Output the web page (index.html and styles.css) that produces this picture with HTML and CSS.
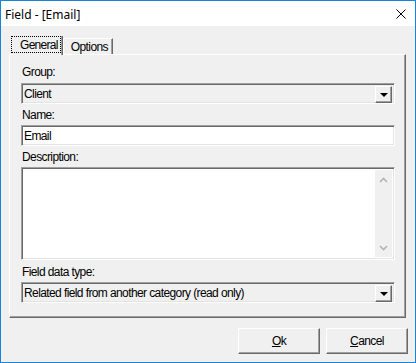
FILE: index.html
```html
<!DOCTYPE html>
<html>
<head>
    <title>Field - [Email]</title>
    <link rel="stylesheet" href="styles.css">
</head>
<body>
    <div class="window">
        <div class="titlebar">
            <span class="title">Field - [Email]</span>
            <svg class="close" width="10" height="10" viewBox="0 0 10 10">
                <path d="M0.5 0.5 L9.5 9.5 M9.5 0.5 L0.5 9.5" stroke="#000" stroke-width="1" fill="none"/>
            </svg>
        </div>

        <div class="content">
            <div class="tabs">
                <div class="tab active"><span class="focus">General</span></div>
                <div class="tab">Options</div>
            </div>

            <div class="panel">
                <div class="label">Group:</div>
                <div class="field combo">
                    <span class="value">Client</span>
                    <span class="drop"><span class="arrow"></span></span>
                </div>

                <div class="label">Name:</div>
                <div class="field input">
                    <span class="value">Email</span>
                </div>

                <div class="label">Description:</div>
                <div class="field memo">
                    <div class="memo-text"></div>
                    <div class="scrollbar">
                        <svg width="9" height="6" viewBox="0 0 9 6">
                            <path d="M1 5 L4.5 1.5 L8 5" stroke="#b4b4b4" stroke-width="1.6" fill="none"/>
                        </svg>
                        <svg width="9" height="6" viewBox="0 0 9 6">
                            <path d="M1 1 L4.5 4.5 L8 1" stroke="#b4b4b4" stroke-width="1.6" fill="none"/>
                        </svg>
                    </div>
                </div>

                <div class="label">Field data type:</div>
                <div class="field combo last">
                    <span class="value">Related field from another category (read only)</span>
                    <span class="drop"><span class="arrow"></span></span>
                </div>
            </div>

            <div class="buttons">
                <button class="button"><u>O</u>k</button>
                <button class="button"><u>C</u>ancel</button>
            </div>
        </div>
    </div>
</body>
</html>
```

FILE: styles.css
```css
body {
    margin: 0;
    font-family: "Liberation Sans", Arial, sans-serif;
    font-size: 12px;
    color: #000;
}

.window {
    width: 416px;
    height: 363px;
    box-sizing: border-box;
    border: 1px solid #1883d7;
    background-color: #f0f0f0;
}

.titlebar {
    height: 25px;
    background-color: #fff;
    display: flex;
    align-items: center;
    justify-content: space-between;
    padding: 0 9px 0 4px;
}

.title {
    font-family: "Noto Sans", sans-serif;
    font-size: 12px;
    padding-top: 1px;
}

.close {
    display: block;
    margin-top: 1px;
}

.content {
    padding: 10px 7px 0 8px;
}

/* tabs */
.tabs {
    display: flex;
    align-items: flex-end;
    padding-left: 2px;
    height: 18px;
    position: relative;
    z-index: 1;
}

.tab {
    box-sizing: border-box;
    height: 16px;
    line-height: 14px;
    padding: 1px 4px 0 7px;
    border-top: 1px solid #fff;
    border-left: 1px solid #fff;
    border-right: 1px solid #696969;
    box-shadow: inset -1px 0 #a0a0a0;
    letter-spacing: -0.6px;
    background-color: #f0f0f0;
}

.tab.active {
    height: 19px;
    margin-bottom: -1px;
    padding: 0 1px 0 0;
    border-top: none;
    border-left: none;
    display: flex;
    letter-spacing: -0.7px;
}

.focus {
    flex: 1;
    border: 1px dotted #000;
    padding: 2px 2px 0 8px;
    line-height: 13px;
    margin-bottom: 2px;
}

/* panel */
.panel {
    border-top: 1px solid #fff;
    border-left: 1px solid #fff;
    border-right: 1px solid #696969;
    border-bottom: 1px solid #696969;
    box-shadow: inset -1px -1px #a0a0a0;
    padding: 10px 10px 14px 11px;
    box-sizing: border-box;
    width: 397px;
}

.label {
    line-height: 14px;
    margin-bottom: 3px;
    padding-left: 1px;
    letter-spacing: -0.6px;
}

.label:first-child {
    margin-bottom: 4px;
}

.field {
    height: 21px;
    box-sizing: border-box;
    border-top: 1px solid #a0a0a0;
    border-left: 1px solid #a0a0a0;
    border-right: 1px solid #fff;
    border-bottom: 1px solid #fff;
    box-shadow: inset 1px 1px #696969, inset -1px -1px #e3e3e3;
    margin-bottom: 4px;
    display: flex;
    align-items: center;
}

.field.last {
    margin-bottom: 0;
}

.value {
    flex: 1;
    padding-left: 2px;
    padding-top: 1px;
    letter-spacing: -0.6px;
    white-space: nowrap;
}

.combo {
    background-color: #f0f0f0;
}

.input {
    background-color: #fff;
}

.drop {
    width: 17px;
    height: 17px;
    box-sizing: border-box;
    margin-right: 2px;
    margin-top: 1px;
    border-top: 1px solid #fff;
    border-left: 1px solid #fff;
    border-right: 1px solid #696969;
    border-bottom: 1px solid #696969;
    box-shadow: inset -1px -1px #a0a0a0;
    background-color: #f0f0f0;
    display: flex;
    align-items: center;
    justify-content: center;
}

.arrow {
    width: 0;
    height: 0;
    border-left: 4px solid transparent;
    border-right: 4px solid transparent;
    border-top: 4px solid #000;
    margin-top: 1px;
}

.memo {
    height: 93px;
    margin-bottom: 5px;
    background-color: #fff;
    align-items: stretch;
    padding: 2px;
}

.memo-text {
    flex: 1;
}

.scrollbar {
    width: 17px;
    background-color: #f0f0f0;
    display: flex;
    flex-direction: column;
    justify-content: space-between;
    align-items: center;
    padding: 7px 0 6px 0;
    box-sizing: border-box;
}

.scrollbar svg {
    display: block;
}

/* buttons */
.buttons {
    display: flex;
    justify-content: flex-end;
    gap: 6px;
    margin-top: 10px;
}

.button {
    width: 82px;
    height: 26px;
    font-family: "Liberation Sans", Arial, sans-serif;
    font-size: 12px;
    letter-spacing: -0.6px;
    color: #000;
    background-color: #f0f0f0;
    border-top: 1px solid #fff;
    border-left: 1px solid #fff;
    border-right: 1px solid #696969;
    border-bottom: 1px solid #696969;
    box-shadow: inset -1px -1px #a0a0a0;
    padding: 0;
    margin: 0;
}
```
